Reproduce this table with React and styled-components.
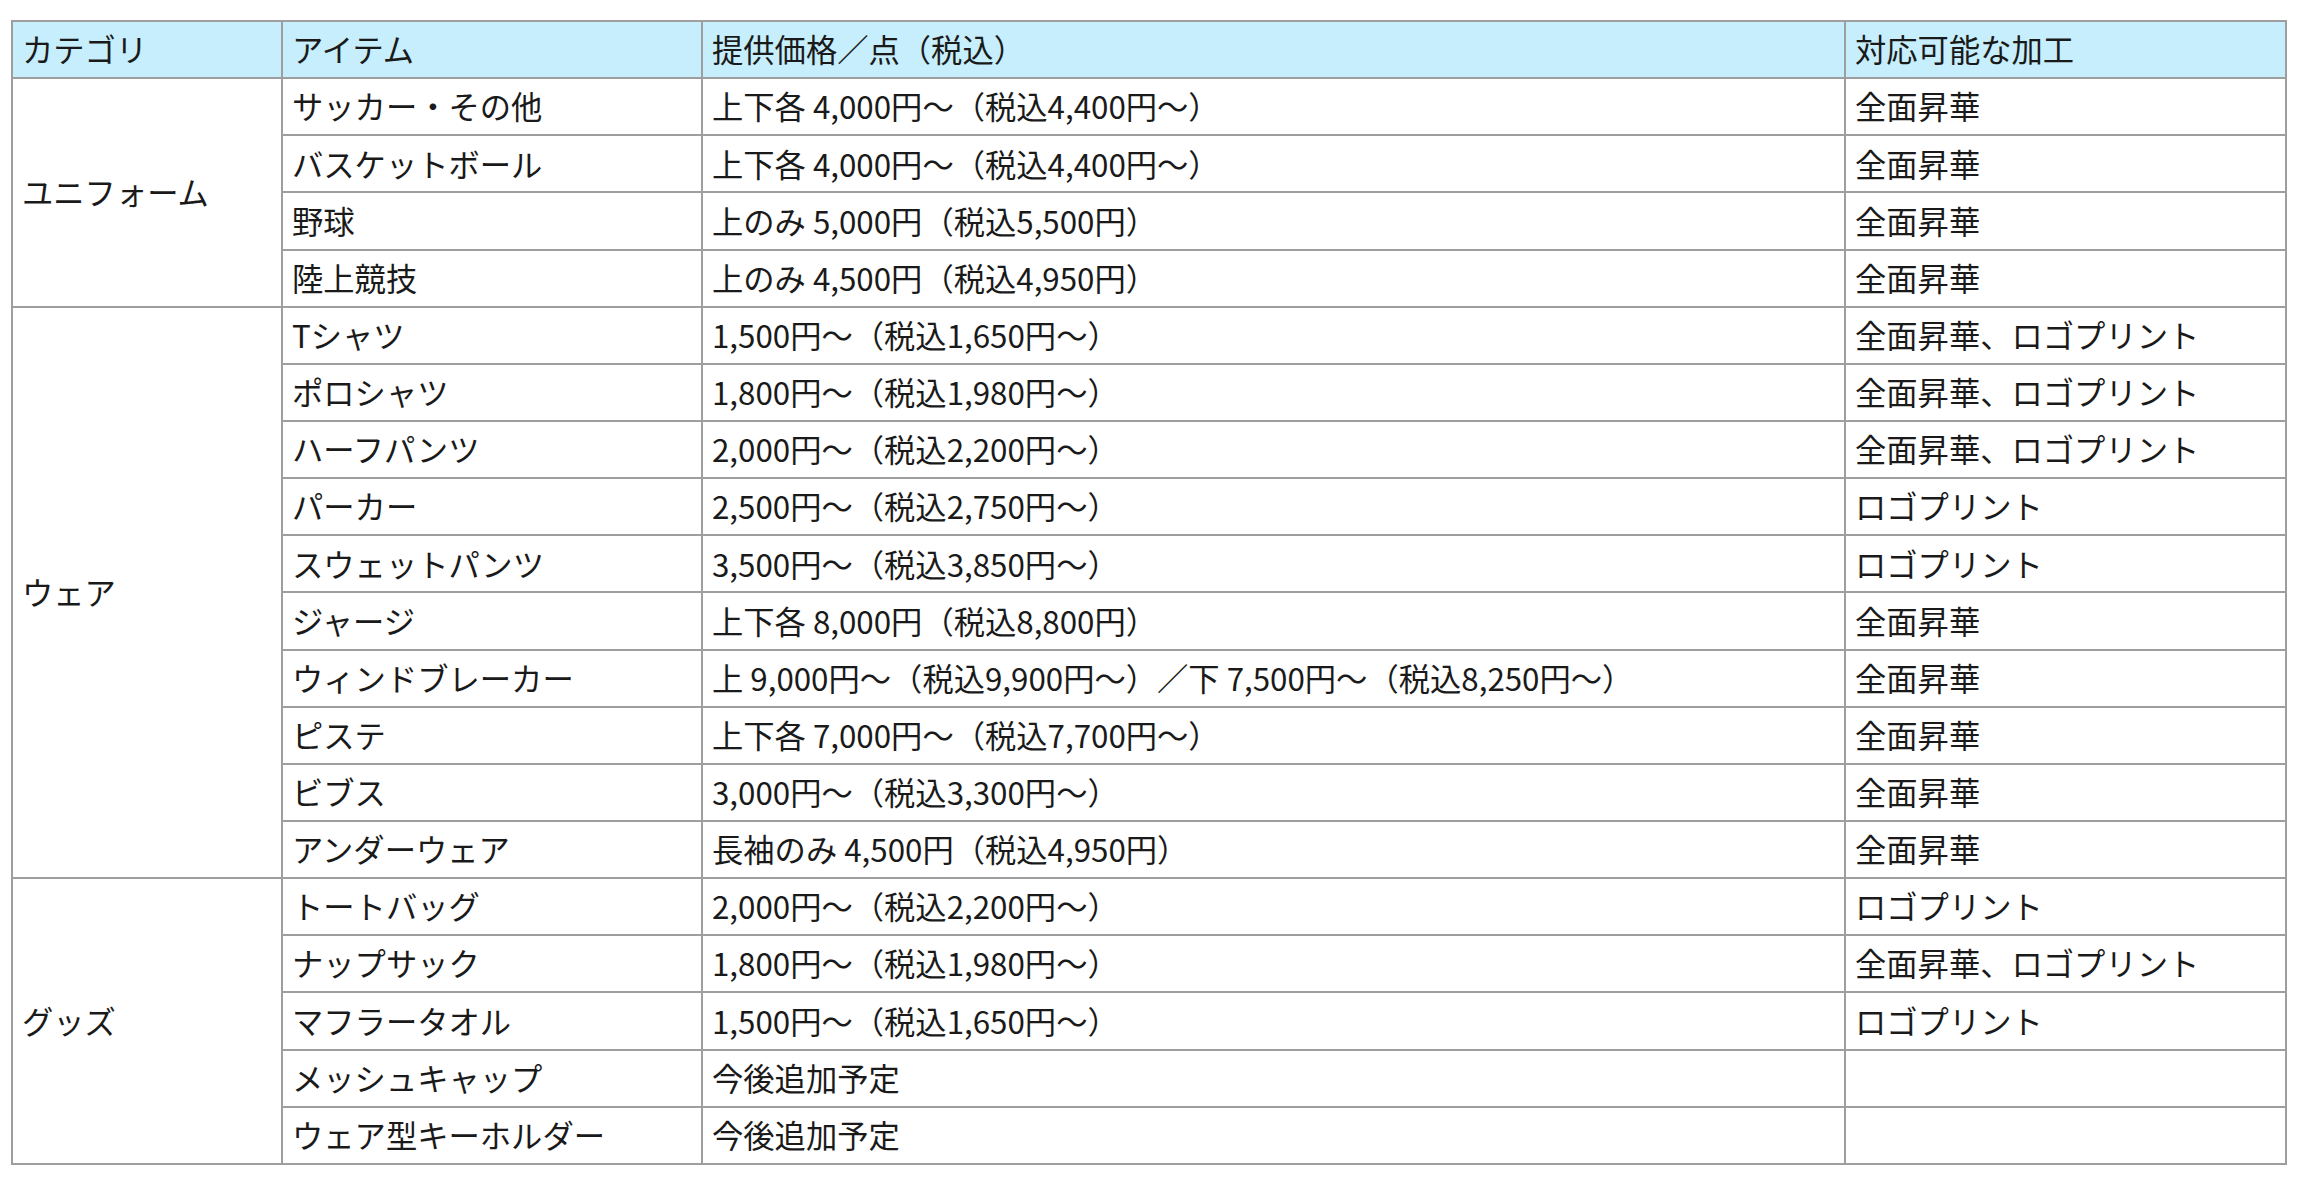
import React from "react";
import styled, { createGlobalStyle } from "styled-components";

const GlobalStyle = createGlobalStyle`
  html, body {
    margin: 0;
    padding: 0;
    background: #ffffff;
  }
  body {
    font-family: "Noto Sans CJK JP", "Noto Sans", sans-serif;
    color: #1a1a1a;
  }
`;

const Page = styled.div`
  padding: 20px 0 0 11px;
`;

const Table = styled.table`
  border-collapse: collapse;
  table-layout: fixed;
  width: 2276px;
  font-size: 31.3px;
  line-height: 1.3;
`;

const HeadCell = styled.th`
  background: #c6eefc;
  border: 2px solid #9e9e9e;
  height: 55.15px;
  padding: 0 8px 0 9px;
  text-align: left;
  font-weight: 400;
  vertical-align: middle;
  white-space: nowrap;
`;

const Cell = styled.td`
  border: 2px solid #9e9e9e;
  height: 55.15px;
  padding: 0 8px 0 9px;
  text-align: left;
  vertical-align: middle;
  white-space: nowrap;
  background: #ffffff;
`;

// 列幅（枠線の中心間）
const columns = [270, 420, 1143, 441];

const groups = [
  {
    category: "ユニフォーム",
    items: [
      ["サッカー・その他", "上下各 4,000円〜（税込4,400円〜）", "全面昇華"],
      ["バスケットボール", "上下各 4,000円〜（税込4,400円〜）", "全面昇華"],
      ["野球", "上のみ 5,000円（税込5,500円）", "全面昇華"],
      ["陸上競技", "上のみ 4,500円（税込4,950円）", "全面昇華"],
    ],
  },
  {
    category: "ウェア",
    items: [
      ["Tシャツ", "1,500円〜（税込1,650円〜）", "全面昇華、ロゴプリント"],
      ["ポロシャツ", "1,800円〜（税込1,980円〜）", "全面昇華、ロゴプリント"],
      ["ハーフパンツ", "2,000円〜（税込2,200円〜）", "全面昇華、ロゴプリント"],
      ["パーカー", "2,500円〜（税込2,750円〜）", "ロゴプリント"],
      ["スウェットパンツ", "3,500円〜（税込3,850円〜）", "ロゴプリント"],
      ["ジャージ", "上下各 8,000円（税込8,800円）", "全面昇華"],
      [
        "ウィンドブレーカー",
        "上 9,000円〜（税込9,900円〜）／下 7,500円〜（税込8,250円〜）",
        "全面昇華",
      ],
      ["ピステ", "上下各 7,000円〜（税込7,700円〜）", "全面昇華"],
      ["ビブス", "3,000円〜（税込3,300円〜）", "全面昇華"],
      ["アンダーウェア", "長袖のみ 4,500円（税込4,950円）", "全面昇華"],
    ],
  },
  {
    category: "グッズ",
    items: [
      ["トートバッグ", "2,000円〜（税込2,200円〜）", "ロゴプリント"],
      ["ナップサック", "1,800円〜（税込1,980円〜）", "全面昇華、ロゴプリント"],
      ["マフラータオル", "1,500円〜（税込1,650円〜）", "ロゴプリント"],
      ["メッシュキャップ", "今後追加予定", ""],
      ["ウェア型キーホルダー", "今後追加予定", ""],
    ],
  },
];

const App = () => {
  return (
    <Page>
      <GlobalStyle />
      <Table>
        <colgroup>
          {columns.map((w, i) => (
            <col key={i} style={{ width: w }} />
          ))}
        </colgroup>
        <thead>
          <tr>
            <HeadCell>カテゴリ</HeadCell>
            <HeadCell>アイテム</HeadCell>
            <HeadCell>提供価格／点（税込）</HeadCell>
            <HeadCell>対応可能な加工</HeadCell>
          </tr>
        </thead>
        <tbody>
          {groups.map((g) =>
            g.items.map(([item, price, process], i) => (
              <tr key={g.category + item}>
                {i === 0 && <Cell rowSpan={g.items.length}>{g.category}</Cell>}
                <Cell>{item}</Cell>
                <Cell>{price}</Cell>
                <Cell>{process}</Cell>
              </tr>
            ))
          )}
        </tbody>
      </Table>
    </Page>
  );
};

export default App;
